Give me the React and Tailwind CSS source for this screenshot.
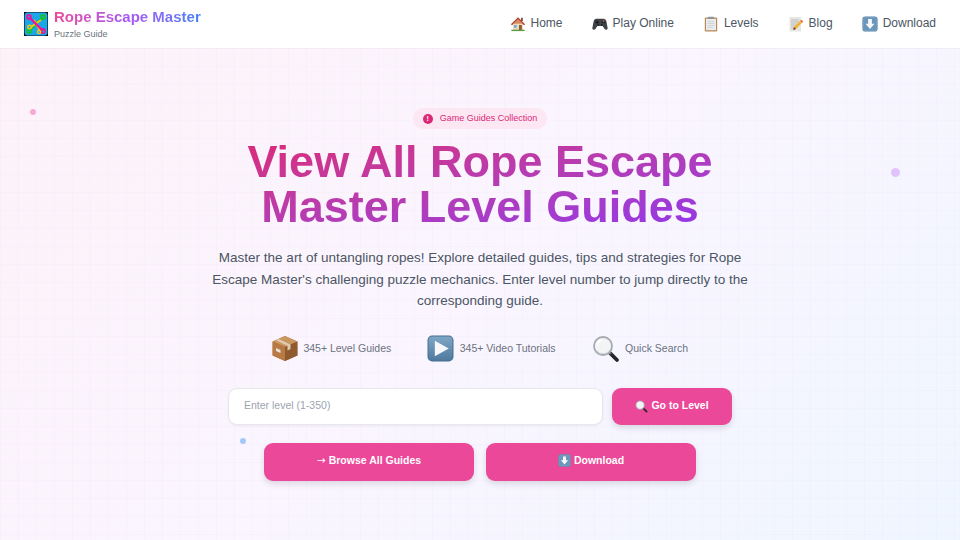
import React from "react";

const House = ({ s = 16 }) => (
  <svg width={s} height={s} viewBox="0 0 16 16" className="shrink-0">
    <path d="M3 7.500h10V14H3z" fill="#f0d9b5" />
    <path d="M.9 8.300 8 1.300l7.100 7-1.100.9L8 3.500 2 9.200z" fill="#a8442e" />
    <path d="M8 3.200 3.200 7.800h9.600z" fill="#d98a5c" />
    <rect x="11" y="1.800" width="1.800" height="3.200" fill="#8a4a34" />
    <rect x="4" y="9" width="2.800" height="2.800" fill="#6fb1dc" />
    <rect x="9" y="9" width="2.800" height="5" fill="#8a5a3a" />
    <rect x="1.400" y="13.700" width="13.200" height="1.400" fill="#5f9a3f" />
  </svg>
);
const Pad = ({ s = 16 }) => (
  <svg width={s} height={s} viewBox="0 0 16 16" className="shrink-0">
    <path d="M4.400 2.800h7.200c1.500 0 2.300.9 2.700 2.300l1.300 6.600c.4 1.900-1.800 2.800-3 1.400l-2-3.100H5.400l-2 3.100c-1.200 1.400-3.400.5-3-1.400l1.300-6.600c.4-1.400 1.200-2.300 2.700-2.300z" fill="#3f4347" />
    <rect x="3.400" y="5.700" width="3.400" height="1.100" fill="#15171a" />
    <rect x="4.550" y="4.600" width="1.100" height="3.300" fill="#15171a" />
    <circle cx="11.800" cy="4.900" r=".8" fill="#d9583b" />
    <circle cx="10.400" cy="6.300" r=".8" fill="#15171a" />
    <circle cx="12.700" cy="6.600" r=".8" fill="#15171a" />
    <circle cx="6.200" cy="9" r="1" fill="#22252a" />
    <circle cx="9.800" cy="9" r="1" fill="#22252a" />
  </svg>
);
const Clip = ({ s = 16 }) => (
  <svg width={s} height={s} viewBox="0 0 16 16" className="shrink-0">
    <rect x="1.800" y="1.400" width="12.400" height="14" rx="1.200" fill="#b98a5a" />
    <rect x="3" y="2.800" width="10" height="11.400" fill="#e9ebec" />
    <rect x="5" y=".8" width="6" height="2.200" rx=".6" fill="#8e9498" />
    <path d="M4.500 5.500h7M4.500 7.500h7M4.500 9.500h7M4.500 11.500h5" stroke="#c7ccd0" strokeWidth=".7" />
  </svg>
);
const Memo = ({ s = 16 }) => (
  <svg width={s} height={s} viewBox="0 0 16 16" className="shrink-0">
    <rect x="1.500" y="1" width="11.500" height="14.500" fill="#e6e6e4" />
    <path d="M3 4h8M3 6h8M3 8h6M3 10h5M3 12h4" stroke="#a9a9a9" strokeWidth=".7" />
    <path d="M13.300 3.800 15.200 5.500 8 13l-2.800.9.800-2.800z" fill="#f2b132" />
    <path d="M6 11.100 8 13l-2.800.9z" fill="#5b4a3a" />
    <path d="M13.300 3.800 15.200 5.500 14.300 6.500 12.300 4.800z" fill="#e2685f" />
  </svg>
);
const DownBox = ({ s = 16 }) => (
  <svg width={s} height={s} viewBox="0 0 16 16" className="shrink-0">
    <rect x=".4" y=".4" width="15.200" height="15.200" rx="2.800" fill="#5a86ab" />
    <rect x="1.300" y="1.300" width="13.400" height="13.400" rx="2" fill="#6a96bb" stroke="#93b6d0" strokeWidth=".4" />
    <path d="M6.100 3h3.800v4.800h2.600L8 13 3.500 7.800h2.600z" fill="#f6f7f9" />
  </svg>
);
const Box = () => (
  <svg width="26" height="27" viewBox="0 0 26 26" className="shrink-0">
    <path d="M13 .6 25.400 6v14L13 25.600.6 20V6z" fill="#a86a38" />
    <path d="M13 .6 25.400 6 13 11.600.6 6z" fill="#c99560" />
    <path d="M13 11.600v14L.6 20V6z" fill="#b87a42" />
    <path d="M13 11.600v14L25.400 20V6z" fill="#8f5a2e" />
    <path d="M6.500 3.400 18.500 8.900v4.600l-3 1.400v-4.700L3.800 4.800z" fill="#e0cbb0" />
    <path d="M4 12.500l4.500 2v3l-4.500-2z" fill="#e8e2d8" />
  </svg>
);
const Play = () => (
  <svg width="27" height="27" viewBox="0 0 26 26" className="shrink-0">
    <defs>
      <linearGradient id="pl" x1="0" y1="0" x2="0" y2="1">
        <stop offset="0" stopColor="#7ea6c6" />
        <stop offset="1" stopColor="#4f7a9e" />
      </linearGradient>
    </defs>
    <rect x=".5" y=".5" width="25" height="25" rx="4.500" fill="#466f90" />
    <rect x="1.500" y="1.500" width="23" height="23" rx="3.500" fill="url(#pl)" />
    <path d="M7.500 5.500 21 13 7.500 20.500z" fill="#f5f7f9" />
  </svg>
);
const Glass = ({ s = 28 }) => (
  <svg width={s} height={s} viewBox="0 0 28 28" className="shrink-0">
    <path d="M18 18 25 25" stroke="#23262b" strokeWidth="3.800" strokeLinecap="round" />
    <path d="M16.500 16.500 19 19" stroke="#6b6f75" strokeWidth="2.400" />
    <circle cx="11" cy="11" r="9" fill="#f3f4f5" stroke="#a6abb0" strokeWidth="1.800" />
    <path d="M5.500 10a5.500 5.500 0 0 1 5-5" fill="none" stroke="#ffffff" strokeWidth="1.500" />
    <path d="M5 16a8 8 0 0 0 12 0" fill="none" stroke="#d3d6d9" strokeWidth="1" />
  </svg>
);
const Logo = () => (
  <svg width="24" height="24" viewBox="0 0 24 24" className="shrink-0">
    <rect width="24" height="24" fill="#0d1114" />
    <rect x=".6" y=".6" width="22.800" height="22.800" rx="3" fill="#1aa7ea" />
    <path d="M19 5 5 19" stroke="#16c22c" strokeWidth="2.200" />
    <path d="M7 15 17 8" stroke="#f4c90c" strokeWidth="1.800" />
    <path d="M10 8 16 19" stroke="#f4c90c" strokeWidth="1.800" />
    <path d="M5 5 19 19" stroke="#e5189c" strokeWidth="2.400" />
    <circle cx="5" cy="5" r="2.100" fill="none" stroke="#e5189c" strokeWidth="1.600" />
    <circle cx="19" cy="5" r="2.100" fill="none" stroke="#16c22c" strokeWidth="1.600" />
    <circle cx="5" cy="19" r="2.100" fill="none" stroke="#16c22c" strokeWidth="1.600" />
    <circle cx="19" cy="19" r="2.100" fill="none" stroke="#e5189c" strokeWidth="1.600" />
    <circle cx="5.500" cy="15" r="1.800" fill="none" stroke="#f4c90c" strokeWidth="1.400" />
    <circle cx="15" cy="20" r="1.600" fill="none" stroke="#f4c90c" strokeWidth="1.400" />
  </svg>
);

const NavItem = ({ icon, label }) => (
  <a className="flex items-center gap-[5px] text-[12px] leading-[16px] text-[#4b5563]">
    {icon}
    <span className="-translate-y-px">{label}</span>
  </a>
);

const Feature = ({ icon, label }) => (
  <div className="flex items-center gap-[5.500px] text-[10.500px] leading-[15px] text-[#6b7280]">
    {icon}
    <span>{label}</span>
  </div>
);

const btn =
  "flex items-center justify-center gap-[3px] rounded-[9px] bg-[#ec4899] text-[10.500px] font-bold text-white shadow-[0_3px_6px_rgba(0,0,0,0.12)]";

export default function App() {
  return (
    <div className="flex h-[540px] w-[960px] flex-col overflow-hidden bg-white font-['Liberation_Sans',Arial,sans-serif]">
      <header className="z-10 flex h-[48px] shrink-0 items-center justify-between bg-white pl-[24px] pr-[24px] shadow-[0_1px_1px_rgba(0,0,0,0.02)]">
        <div className="flex items-center gap-[6px]">
          <Logo />
          <div className="flex flex-col">
            <span className="bg-gradient-to-r from-[#ec4899] via-[#a855f7] to-[#3b82f6] bg-clip-text text-[15px] font-bold leading-[18px] text-transparent">
              Rope Escape Master
            </span>
            <span className="mt-[2px] text-[9px] leading-[12px] text-[#6b7280]">Puzzle Guide</span>
          </div>
        </div>
        <nav className="flex items-center gap-[29px]">
          <NavItem icon={<House />} label="Home" />
          <NavItem icon={<Pad />} label="Play Online" />
          <NavItem icon={<Clip />} label="Levels" />
          <NavItem icon={<Memo />} label="Blog" />
          <NavItem icon={<DownBox />} label="Download" />
        </nav>
      </header>

      <main className="relative flex flex-1 flex-col items-center bg-[linear-gradient(rgba(120,80,200,0.02)_1px,transparent_1px),linear-gradient(90deg,rgba(120,80,200,0.02)_1px,transparent_1px),linear-gradient(135deg,#fdf2f8,#faf5ff_50%,#eff6ff)] bg-[size:18px_18px,18px_18px,100%_100%] pt-[60px]">
        <span className="absolute left-[30px] top-[61px] h-[6px] w-[6px] rounded-full bg-[#f9a8d4]" />
        <span className="absolute left-[891px] top-[120px] h-[9px] w-[9px] rounded-full bg-[#e0c3fc]" />
        <span className="absolute left-[240px] top-[390px] h-[6px] w-[6px] rounded-full bg-[#a5c8fb]" />

        <div className="flex h-[21px] items-center gap-[7px] rounded-full bg-[#fce7f3] px-[10px] text-[9px] leading-none text-[#db2777]">
          <span className="flex h-[10px] w-[10px] items-center justify-center rounded-full bg-[#db2777] text-[7px] font-bold text-white">!</span>
          Game Guides Collection
        </div>

        <h1 className="mt-[10px] bg-gradient-to-br from-[#db2777] to-[#9333ea] bg-clip-text text-center text-[45px] font-bold leading-[45px] text-transparent">
          View All Rope Escape
          <br />
          Master Level Guides
        </h1>

        <p className="mt-[18px] w-[540px] text-center text-[13.500px] leading-[21.500px] text-[#4b5563]">
          Master the art of untangling ropes! Explore detailed guides, tips and strategies for Rope Escape Master's challenging puzzle mechanics. Enter level number to jump directly to the corresponding guide.
        </p>

        <div className="mt-[23px] flex items-center gap-[36px]">
          <Feature icon={<Box />} label="345+ Level Guides" />
          <Feature icon={<Play />} label="345+ Video Tutorials" />
          <Feature icon={<Glass />} label="Quick Search" />
        </div>

        <div className="mt-[25px] flex items-center gap-[9px]">
          <div className="flex h-[37px] w-[375px] items-center rounded-[9px] border border-[#e5e7eb] bg-white pl-[15px] text-[10.500px] text-[#9ca3af] shadow-[0_1px_3px_rgba(0,0,0,0.05)]">
            Enter level (1-350)
          </div>
          <button className={`${btn} h-[37px] w-[120px]`}>
            <Glass s={13} />
            Go to Level
          </button>
        </div>

        <div className="mt-[18px] flex items-center gap-[12px]">
          <button className={`${btn} h-[38px] w-[210px] pb-[2px]`}>
            <span className="font-['DejaVu_Sans',sans-serif] font-normal">→</span>
            Browse All Guides
          </button>
          <button className={`${btn} h-[38px] w-[210px] pb-[2px]`}>
            <DownBox s={13} />
            Download
          </button>
        </div>
      </main>
    </div>
  );
}
